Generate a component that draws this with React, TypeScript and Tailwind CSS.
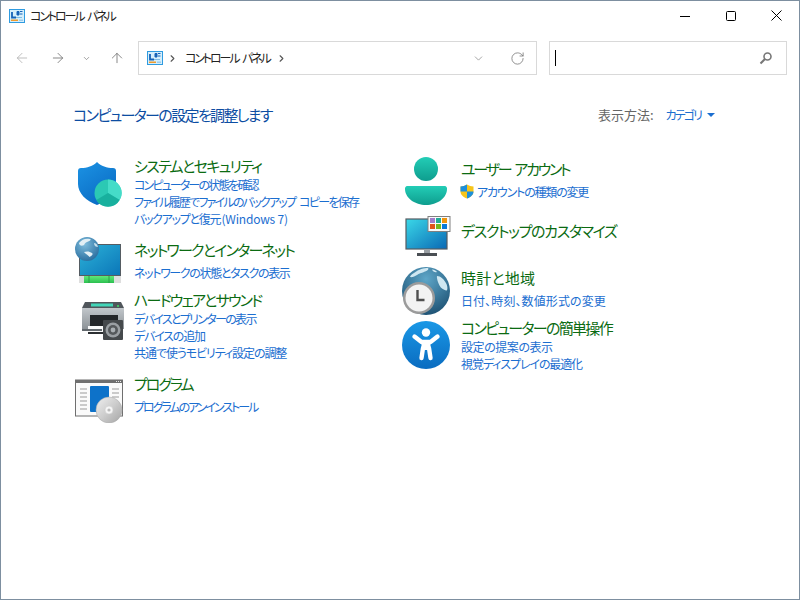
import { ReactNode } from 'react';
import { ArrowLeft, ArrowRight, ArrowUp, ChevronDown, ChevronRight, RotateCw } from 'lucide-react';

function CpIcon() {
  return (
    <svg width="16" height="14" viewBox="0 0 16 14" className="shrink-0">
      <rect x="0.5" y="0.5" width="15" height="13" fill="#d5eefb" stroke="#2f9be0" />
      <path d="M3 3v5.500h4" fill="none" stroke="#1662b8" strokeWidth="1.800" />
      <path d="M8 2.500h2v3.500h-2zM11 2.500h2.500M11 5h2.500" fill="#1662b8" stroke="#1662b8" />
      <path d="M7 8.500h6" stroke="#7fbde6" />
      <rect x="2" y="10.500" width="7" height="1.500" fill="#ee9a2c" />
      <rect x="10" y="10.500" width="4" height="1.500" fill="#9ccbea" />
    </svg>
  );
}

function Shield() {
  return (
    <svg width="48" height="48" viewBox="0 0 48 48">
      <defs>
        <linearGradient id="sh" x1="0" y1="0" x2="0.6" y2="1">
          <stop offset="0" stopColor="#1c93e4" />
          <stop offset="1" stopColor="#0a6cc4" />
        </linearGradient>
      </defs>
      <path d="M22 2c4 4 10 6 16 6 2 0 3 1 3 3v13c0 9-8 17-19 21C11 41 3 33 3 24V11c0-2 1-3 3-3 6 0 12-2 16-6z" fill="url(#sh)" />
      <circle cx="33" cy="33" r="13.500" fill="#2bc9b4" />
      <path d="M33 33V19.500A13.500 13.500 0 0 1 44.700 40z" fill="#45dcc8" />
      <path d="M33 33l11.700 7A13.500 13.500 0 0 1 21.300 40z" fill="#18b09e" />
    </svg>
  );
}

function Network() {
  return (
    <svg width="48" height="48" viewBox="0 0 48 48">
      <defs>
        <linearGradient id="nw" x1="0" y1="0" x2="1" y2="1">
          <stop offset="0" stopColor="#2cb2d8" />
          <stop offset="1" stopColor="#0b76b8" />
        </linearGradient>
        <radialGradient id="gl" cx="0.4" cy="0.3" r="0.8">
          <stop offset="0" stopColor="#7ebcdc" />
          <stop offset="1" stopColor="#22679a" />
        </radialGradient>
        <linearGradient id="bs" x1="0" y1="0" x2="0" y2="1">
          <stop offset="0" stopColor="#5fe878" />
          <stop offset="1" stopColor="#2cc050" />
        </linearGradient>
      </defs>
      <rect x="4.500" y="7.500" width="41" height="31" fill="url(#nw)" stroke="#555c62" />
      <rect x="4" y="39" width="42" height="7" fill="#dedede" />
      <rect x="9" y="39" width="30" height="7" fill="url(#bs)" />
      <path d="M14 39v7M34 39v7" stroke="#2a9e48" />
      <circle cx="12" cy="12" r="12" fill="url(#gl)" />
      <path d="M4 6c3-4 7-5 11-4 2 1-1 2-3 3-3 1-2 3-4 3.500-2 .5-4-.5-4-2.500zM9 15c3-1 6-.5 8 1 1.500 1 0 3-2.500 4-1-2-4.500-3-5.500-5z" fill="#e2eff5" />
      <path d="M19 6c2 0 3 1 4 4-2 0-4-1-4-4z" fill="#c4dfec" />
    </svg>
  );
}

function Printer() {
  return (
    <svg width="48" height="48" viewBox="0 0 48 48">
      <defs>
        <linearGradient id="pr" x1="0" y1="0" x2="0" y2="1">
          <stop offset="0" stopColor="#c2c7cb" />
          <stop offset="1" stopColor="#8d9398" />
        </linearGradient>
      </defs>
      <path d="M7 0h36l3 6H4z" fill="#50565b" />
      <rect x="13" y="1.500" width="22" height="3" fill="#42d6b8" />
      <circle cx="40" cy="4" r="1" fill="#3fe060" />
      <rect x="4" y="6" width="42" height="21" fill="url(#pr)" />
      <rect x="12" y="13" width="28" height="13" fill="#232629" />
      <rect x="10" y="24" width="28" height="6" fill="#fafafa" />
      <rect x="4" y="27" width="20" height="2" fill="#63696e" />
      <rect x="10" y="30" width="20" height="2" fill="#2c2f32" />
      <rect x="25" y="18" width="20" height="20" rx="1" fill="#45494c" />
      <circle cx="35" cy="28" r="7.500" fill="#9a9fa3" />
      <circle cx="35" cy="28" r="5" fill="#55595c" />
      <circle cx="35" cy="28" r="2.400" fill="#a9afb3" />
    </svg>
  );
}

function Programs() {
  return (
    <svg width="50" height="44" viewBox="0 0 50 44">
      <defs>
        <linearGradient id="cd" x1="0" y1="0" x2="1" y2="1">
          <stop offset="0" stopColor="#f0f0f0" />
          <stop offset="0.5" stopColor="#cdcdcd" />
          <stop offset="1" stopColor="#a4a4a4" />
        </linearGradient>
      </defs>
      <rect x="0.500" y="1" width="47" height="36" fill="#fafafa" stroke="#6f6f6f" />
      <rect x="0.500" y="1" width="47" height="3" fill="#6f6f6f" />
      <path d="M41 2.500h1M43 2.500h1M45 2.500h1" stroke="#e8e8e8" />
      <path d="M5 10h7M5 14h7M5 18h7M5 22h7M5 26h7M5 30h7M37 10h7M37 14h7M37 18h7" stroke="#9a9a9a" />
      <rect x="15" y="7" width="19" height="26" rx="1" fill="#0d72c9" />
      <circle cx="34" cy="31" r="13" fill="url(#cd)" stroke="#a8a8a8" strokeWidth="0.500" />
      <circle cx="34" cy="31" r="4" fill="#f6f6f6" stroke="#c8c8c8" strokeWidth="0.500" />
      <circle cx="34" cy="31" r="1.600" fill="#bbb" />
    </svg>
  );
}

function User() {
  return (
    <svg width="48" height="48" viewBox="0 0 48 48">
      <defs>
        <linearGradient id="us" x1="0" y1="0" x2="0" y2="1">
          <stop offset="0" stopColor="#23cdb6" />
          <stop offset="1" stopColor="#0e9d8e" />
        </linearGradient>
      </defs>
      <circle cx="23" cy="12" r="12" fill="url(#us)" />
      <path d="M5 29h36c3 0 3 2 3 3 0 9-10 16-21 16S2 41 2 32c0-1 0-3 3-3z" fill="url(#us)" />
    </svg>
  );
}

function Desktop() {
  return (
    <svg width="48" height="42" viewBox="0 0 48 42">
      <defs>
        <linearGradient id="ds" x1="0" y1="0" x2="1" y2="1">
          <stop offset="0" stopColor="#3ad8e8" />
          <stop offset="1" stopColor="#0a68b4" />
        </linearGradient>
      </defs>
      <rect x="1" y="3" width="41" height="30" fill="url(#ds)" stroke="#555c62" strokeWidth="1.200" />
      <rect x="19" y="33" width="6" height="5" fill="#9aa0a5" />
      <rect x="12" y="37" width="20" height="3" fill="#4a4f54" />
      <rect x="23" y="0.500" width="22" height="15" fill="#fafafa" stroke="#808080" />
      <rect x="25" y="2" width="5" height="5" fill="#a07ccc" />
      <rect x="31" y="2" width="5" height="5" fill="#20ac98" />
      <rect x="37" y="2" width="5" height="5" fill="#f0940c" />
      <rect x="25" y="8" width="5" height="5" fill="#e0541c" />
      <rect x="31" y="8" width="5" height="5" fill="#74b820" />
      <rect x="37" y="8" width="5" height="5" fill="#0a78d8" />
    </svg>
  );
}

function Clock() {
  return (
    <svg width="48" height="48" viewBox="0 0 48 48">
      <defs>
        <radialGradient id="gb" cx="0.5" cy="0.25" r="0.85">
          <stop offset="0" stopColor="#5ea6c8" />
          <stop offset="1" stopColor="#16486a" />
        </radialGradient>
      </defs>
      <circle cx="24" cy="24" r="24" fill="url(#gb)" />
      <path d="M12 6c5-4 10-5 14-5 1.500 1.500-1.500 3-4 4s-5 1.500-7 3-5 2.500-7 2c0-1.500 2.500-3 4-4zM35 9c3.500 0 7 3 9.500 8 1.500 4 1 7-.5 6.500-2.500-1-5-2-6.500-5S34.500 11 35 9zM30 2.500c2 0 4 1 5 2.500-2 .5-4 0-5-2.500z" fill="#cfe7f1" />
      <circle cx="17" cy="31" r="16" fill="#9b9b9b" />
      <circle cx="17" cy="31" r="13.500" fill="#f3f3f3" />
      <path d="M15.500 23v10h7" fill="none" stroke="#4f4f4f" strokeWidth="2.400" />
    </svg>
  );
}

function Access() {
  return (
    <svg width="48" height="48" viewBox="0 0 48 48">
      <defs>
        <linearGradient id="ac" x1="0" y1="0" x2="0" y2="1">
          <stop offset="0" stopColor="#1a98e6" />
          <stop offset="1" stopColor="#0a6cc0" />
        </linearGradient>
      </defs>
      <circle cx="24" cy="24" r="24" fill="url(#ac)" />
      <circle cx="24" cy="11.500" r="4.200" fill="#fff" />
      <path d="M12.500 15.500l7 5.500h9l7-5.500" fill="none" stroke="#fff" strokeWidth="4.400" strokeLinecap="round" strokeLinejoin="round" />
      <rect x="19.500" y="20" width="9" height="9" fill="#fff" />
      <path d="M21 27l-1.500 10M27 27l1.500 10" fill="none" stroke="#fff" strokeWidth="4.400" strokeLinecap="round" />
    </svg>
  );
}

function UacShield() {
  return (
    <svg width="14" height="15" viewBox="0 0 14 15" className="shrink-0">
      <path d="M7 0.500c2 1.300 4 1.800 6.500 2v5c0 3-2.500 5.500-6.500 7-4-1.500-6.500-4-6.500-7v-5c2.500-.2 4.500-.7 6.500-2z" fill="#f6c51b" />
      <path d="M7 0.500V7.500H.5v-5c2.500-.2 4.500-.7 6.500-2z" fill="#1c8fdc" />
      <path d="M7 7.500h6.500c0 3-2.500 5.500-6.500 7z" fill="#1c8fdc" />
    </svg>
  );
}

function CatItem({ icon, iconBox, title, t, children, box }: { icon: ReactNode; iconBox: string; title: string; t: string; children?: ReactNode; box: string }) {
  return (
    <div className={`flex ${box}`}>
      <div className={`w-[59px] shrink-0 h-0 ${iconBox}`}>{icon}</div>
      <div className="flex flex-col">
        <div className={`h-[20px] text-[15px] leading-[20px] text-[#0b6b12] whitespace-nowrap [font-feature-settings:'palt'] ${t}`}>{title}</div>
        {children}
      </div>
    </div>
  );
}

function Sub({ t, children }: { t: string; children: ReactNode }) {
  return <div className={`h-[17px] text-[12px] leading-[17px] text-[#1b6ed0] whitespace-nowrap [font-feature-settings:'palt'] ${t}`}>{children}</div>;
}

export default function App() {
  return (
    <div className="w-[800px] h-[600px] bg-white border border-[#7d8fa0] overflow-hidden flex flex-col font-['Noto_Sans_CJK_JP','Liberation_Sans',sans-serif]">
      {/* title bar */}
      <div className="h-[29px] flex items-center pl-[8px] shrink-0">
        <CpIcon />
        <span className="ml-[5px] text-[12px] text-[#222] tracking-[-2.100px] [word-spacing:3px] [font-feature-settings:'palt']">コントロール パネル</span>
        <div className="ml-auto flex items-center text-black">
          <div className="w-[46px] flex justify-center">
            <svg width="10" height="10" viewBox="0 0 10 10"><path d="M0 5.500h10" stroke="currentColor" /></svg>
          </div>
          <div className="w-[46px] flex justify-center">
            <svg width="10" height="10" viewBox="0 0 10 10"><rect x="0.500" y="0.500" width="9" height="9" rx="1" fill="none" stroke="currentColor" /></svg>
          </div>
          <div className="w-[45px] flex justify-center">
            <svg width="11" height="11" viewBox="0 0 11 11"><path d="M0.500 0.500l10 10M10.500 0.500l-10 10" stroke="currentColor" /></svg>
          </div>
        </div>
      </div>

      {/* address row */}
      <div className="h-[34px] mt-[11px] flex items-center shrink-0">
        <div className="flex items-center w-[137px] text-[#777]">
          <div className="w-[47px] pl-[13px]"><ArrowLeft size={16} strokeWidth={1.300} className="text-[#b5b5b5]" /></div>
          <div className="w-[31px] pl-[2px]"><ArrowRight size={16} strokeWidth={1.300} /></div>
          <div className="w-[30px] pl-[3px]"><ChevronDown size={9} strokeWidth={1.800} /></div>
          <div><ArrowUp size={16} strokeWidth={1.300} /></div>
        </div>
        <div className="w-[399px] h-[34px] border border-[#d9d9d9] flex items-center pl-[8px] pr-[11px]">
          <CpIcon />
          <ChevronRight size={11} strokeWidth={2.400} className="ml-[4px] text-[#555]" />
          <span className="ml-[7px] text-[12px] text-[#222] tracking-[-2.100px] [word-spacing:3px] [font-feature-settings:'palt']">コントロール パネル</span>
          <ChevronRight size={11} strokeWidth={2.400} className="ml-[6px] text-[#555]" />
          <ChevronDown size={13} strokeWidth={1.200} className="ml-auto text-[#777]" />
          <RotateCw size={15} strokeWidth={1.300} className="ml-[25px] text-[#777]" />
        </div>
        <div className="w-[238px] h-[34px] ml-[12px] border border-[#d9d9d9] flex items-center pl-[5px] pr-[13px]">
          <div className="w-px h-[16px] bg-black" />
          <svg width="14" height="14" viewBox="0 0 14 14" className="ml-auto text-[#777]">
            <circle cx="8.500" cy="5.500" r="3.500" fill="none" stroke="currentColor" strokeWidth="1.600" />
            <path d="M6 8l-4.500 4.500" stroke="currentColor" strokeWidth="2" />
          </svg>
        </div>
      </div>

      {/* heading row */}
      <div className="mt-[28px] pl-[72px] pr-[84px] flex items-center justify-between h-[24px] shrink-0">
        <h1 className="text-[15px] text-[#0c4da2] tracking-[-1.650px] font-normal whitespace-nowrap [font-feature-settings:'palt']">コンピューターの設定を調整します</h1>
        <div className="flex items-center [font-feature-settings:'palt']">
          <span className="text-[13px] text-[#666]">表示方法:</span>
          <span className="ml-[12px] text-[12px] tracking-[-1.900px] text-[#1b6ed0]">カテゴリ</span>
          <span className="ml-[6px] w-0 h-0 border-x-[4px] border-x-transparent border-t-[4px] border-t-[#1b6ed0]" />
        </div>
      </div>

      {/* categories */}
      <div className="grid grid-cols-[327px_1fr] pl-[74px]">
        <div className="flex flex-col">
          <CatItem box="mt-[29px] h-[71px]" iconBox="mt-[4px]" icon={<Shield />} title="システムとセキュリティ" t="tracking-[-1.650px]">
            <Sub t="tracking-[-1.880px]">コンピューターの状態を確認</Sub>
            <Sub t="tracking-[-1.760px] [word-spacing:3px]">ファイル履歴でファイルのバックアップ コピーを保存</Sub>
            <Sub t="tracking-[-1.300px]">バックアップと復元 <span className="tracking-[-0.200px]">(Windows 7)</span></Sub>
          </CatItem>
          <CatItem box="mt-[13px] h-[41px]" iconBox="-mt-[3px]" icon={<Network />} title="ネットワークとインターネット" t="tracking-[-1.770px]">
            <div className="h-[4px]" />
            <Sub t="tracking-[-1.360px]">ネットワークの状態とタスクの表示</Sub>
          </CatItem>
          <CatItem box="mt-[9px] h-[71px]" iconBox="mt-[12px] pl-[3px]" icon={<Printer />} title="ハードウェアとサウンド" t="tracking-[-1.750px]">
            <Sub t="tracking-[-1.680px]">デバイスとプリンターの表示</Sub>
            <Sub t="tracking-[-1.200px]">デバイスの追加</Sub>
            <Sub t="tracking-[-1.070px]">共通で使うモビリティ設定の調整</Sub>
          </CatItem>
          <CatItem box="mt-[13px] h-[41px]" iconBox="mt-[5px]" icon={<Programs />} title="プログラム" t="tracking-[-2px]">
            <div className="h-[4px]" />
            <Sub t="tracking-[-2.050px]">プログラムのアンインストール</Sub>
          </CatItem>
        </div>
        <div className="flex flex-col">
          <CatItem box="mt-[32px] h-[41px]" iconBox="-mt-[2px] pl-[1px]" icon={<User />} title="ユーザー アカウント" t="tracking-[-2.250px] [word-spacing:3px]">
            <div className="h-[4px]" />
            <div className="flex items-center -ml-[1px] gap-[3px]"><UacShield /><Sub t="tracking-[-1.180px]">アカウントの種類の変更</Sub></div>
          </CatItem>
          <CatItem box="mt-[21px] h-[20px]" iconBox="-mt-[5px] pl-[3px]" icon={<Desktop />} title="デスクトップのカスタマイズ" t="tracking-[-1.350px]" />
          <CatItem box="mt-[27px] h-[41px]" iconBox="-mt-[1px]" icon={<Clock />} title="時計と地域" t="tracking-[0.200px]">
            <div className="h-[4px]" />
            <Sub t="tracking-[0.100px]">日付、時刻、数値形式の変更</Sub>
          </CatItem>
          <CatItem box="mt-[9px] h-[54px]" iconBox="mt-[3px]" icon={<Access />} title="コンピューターの簡単操作" t="tracking-[-1.700px]">
            <Sub t="tracking-[-0.450px]">設定の提案の表示</Sub>
            <Sub t="tracking-[-1.100px]">視覚ディスプレイの最適化</Sub>
          </CatItem>
        </div>
      </div>
    </div>
  );
}
